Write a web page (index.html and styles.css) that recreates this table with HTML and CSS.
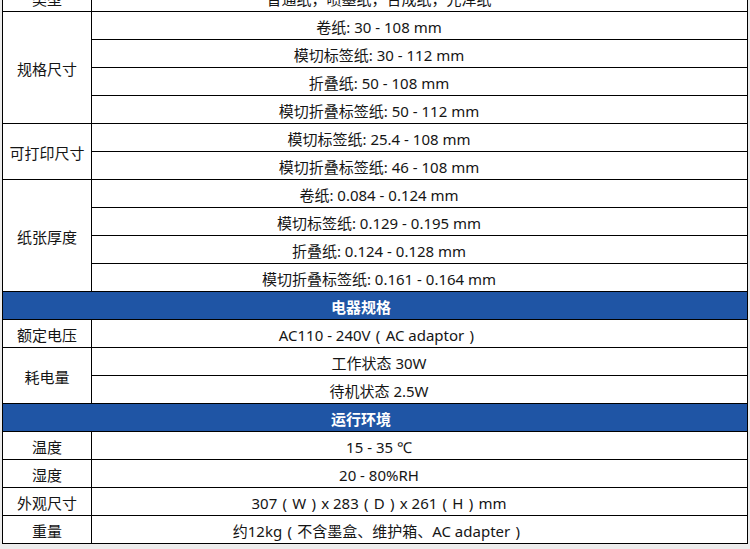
FILE: index.html
```html
<!DOCTYPE html>
<html lang="zh-CN">
<head>
<meta charset="utf-8">
<title>规格</title>
<link rel="stylesheet" href="styles.css">
</head>
<body>
<div class="page">
<table class="spec">
  <colgroup><col class="c-label"><col class="c-val"></colgroup>
  <tbody>
    <tr><td class="label">类型</td><td class="val">普通纸，喷墨纸，合成纸，光泽纸</td></tr>
    <tr><td class="label" rowspan="4">规格尺寸</td><td class="val">卷纸: 30 - 108 mm</td></tr>
    <tr><td class="val">模切标签纸: 30 - 112 mm</td></tr>
    <tr><td class="val">折叠纸: 50 - 108 mm</td></tr>
    <tr><td class="val">模切折叠标签纸: 50 - 112 mm</td></tr>
    <tr><td class="label" rowspan="2">可打印尺寸</td><td class="val">模切标签纸: 25.4 - 108 mm</td></tr>
    <tr><td class="val">模切折叠标签纸: 46 - 108 mm</td></tr>
    <tr><td class="label" rowspan="4">纸张厚度</td><td class="val">卷纸: 0.084 - 0.124 mm</td></tr>
    <tr><td class="val">模切标签纸: 0.129 - 0.195 mm</td></tr>
    <tr><td class="val">折叠纸: 0.124 - 0.128 mm</td></tr>
    <tr><td class="val">模切折叠标签纸: 0.161 - 0.164 mm</td></tr>
    <tr class="section"><td colspan="2">电器规格</td></tr>
    <tr><td class="label">额定电压</td><td class="val">AC110 - 240V<span class="fw">(</span>AC adaptor<span class="fw">)</span></td></tr>
    <tr><td class="label" rowspan="2">耗电量</td><td class="val">工作状态 30W</td></tr>
    <tr><td class="val">待机状态 2.5W</td></tr>
    <tr class="section"><td colspan="2">运行环境</td></tr>
    <tr><td class="label">温度</td><td class="val">15 - 35 ℃</td></tr>
    <tr><td class="label">湿度</td><td class="val">20 - 80%RH</td></tr>
    <tr><td class="label">外观尺寸</td><td class="val">307<span class="fw">(</span>W<span class="fw">)</span>x 283<span class="fw">(</span>D<span class="fw">)</span>x 261<span class="fw">(</span>H<span class="fw">)</span>mm</td></tr>
    <tr><td class="label">重量</td><td class="val">约12kg<span class="fw">(</span>不含墨盒、维护箱、AC adapter<span class="fw">)</span></td></tr>
  </tbody>
</table>
</div>
</body>
</html>
```

FILE: styles.css
```css
html, body {
  margin: 0;
  padding: 0;
  background: #ececec;
}
.page {
  padding: 0 2px;
  overflow: hidden;
  height: 549px;
}
.spec {
  width: 746px;
  margin-top: -17px;
  border-collapse: collapse;
  background: #fff;
  font-family: "Noto Sans", "Noto Sans CJK SC", sans-serif;
  font-size: 15px;
  color: #151515;
  table-layout: fixed;
}
.c-label { width: 89px; }
.spec tr { height: 28px; }
.spec td {
  border: 1px solid #000;
  text-align: center;
  vertical-align: middle;
  padding: 2px 0 0 0;
  line-height: 20px;
  white-space: nowrap;
}
.spec td.val {
  padding-right: 81px;
}
.fw {
  display: inline-block;
  width: 15px;
  text-align: center;
}
.spec tr.section td {
  background: #1f55a5;
  color: #fff;
  font-weight: bold;
  padding-right: 28px;
}
```
